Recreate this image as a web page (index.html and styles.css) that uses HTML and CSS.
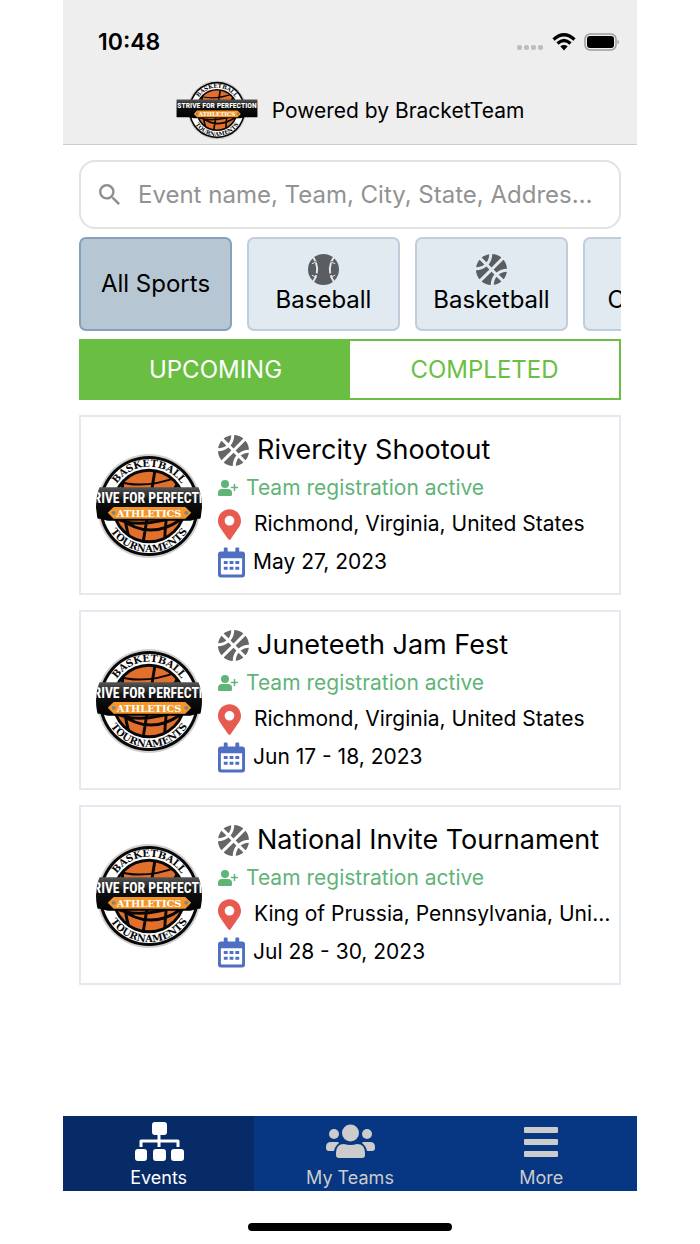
FILE: index.html
```html
<!DOCTYPE html>
<html lang="en">
<head>
    <meta charset="UTF-8">
    <meta name="viewport" content="width=device-width, initial-scale=1.0">
    <title>BracketTeam Events</title>
    <link rel="stylesheet" href="styles.css">
</head>
<body>
    <!-- shared icons -->
    <svg class="sprite" aria-hidden="true">
        <defs>
            <clipPath id="ball-clip"><circle r="36"/></clipPath>
            <linearGradient id="banner-fill" x1="0" y1="0" x2="0" y2="1">
                <stop offset="0" stop-color="#555"/>
                <stop offset=".4" stop-color="#111"/>
                <stop offset="1" stop-color="#000"/>
            </linearGradient>
            <path id="arc-top" d="M-40 0A40 40 0 0 1 40 0"/>
            <path id="arc-bottom" d="M-47 0A47 47 0 0 0 47 0"/>
            <mask id="seams">
                <rect width="32" height="32" fill="#fff"/>
                <path d="M5 3Q14 16 5 29M27 3Q18 16 27 29" fill="none" stroke="#000" stroke-width="2" stroke-dasharray="5 2 11 2 20"/>
                <path d="M4 10l5-2M4 22l5 2M28 10l-5-2M28 22l-5 2" stroke="#000" stroke-width="1"/>
            </mask>
        </defs>
        <symbol id="logo" viewBox="-74 -54 148 108">
            <circle r="53" fill="#d0d0d0"/>
            <circle r="51" fill="#080808"/>
            <circle r="48" fill="#fff"/>
            <circle r="38" fill="#080808"/>
            <circle r="35" fill="#e2702c"/>
            <g clip-path="url(#ball-clip)" fill="none" stroke="#080808" stroke-width="3">
                <path d="M6-36Q0 0-6 37M-26-30Q-30-4-20 34M32-27Q17-8 16 36M-30 12Q0 36 32 14M-36 12Q-10 25 36 8"/>
                <path d="M-35-26Q-6-16 30-30" stroke-width="2"/>
            </g>
            <text class="logo-ring"><textPath href="#arc-top" startOffset="50%">BASKETBALL</textPath></text>
            <text class="logo-ring"><textPath href="#arc-bottom" startOffset="50%">TOURNAMENTS</textPath></text>
            <path d="M-73-19H73V13H50L42 15H-42L-50 13H-73z" fill="url(#banner-fill)"/>
            <text class="logo-name" y="-3">STRIVE FOR PERFECTION</text>
            <path d="M-42 7L-36 1H37L43 7L37 13H-36z" fill="#f5962a"/>
            <circle cx="-36" cy="7" r="2" fill="#7f8388"/>
            <circle cx="38" cy="7" r="2" fill="#7f8388"/>
            <text class="logo-sub" y="11">ATHLETICS</text>
        </symbol>
        <symbol id="basketball" viewBox="0 8 496 496">
            <path d="M212.3 10.3c-43.8 6.3-86.2 24.1-122.2 53.8l77.4 77.4c27.8-35.8 43.3-81.2 44.8-131.2zM248 222L405.9 64.1c-42.4-35-93.6-53.5-145.5-56.1-1.2 63.9-21.5 122.3-58.7 167.7L248 222zM56.1 98.1c-29.7 36-47.5 78.4-53.8 122.2 50-1.5 95.5-17 131.2-44.8L56.1 98.1zm272.2 204.2c45.3-37.1 103.7-57.4 167.7-58.7-2.6-51.9-21.1-103.1-56.1-145.5L282 256l46.3 46.3zM248 290L90.1 447.9c42.4 34.9 93.6 53.5 145.5 56.1 1.3-64 21.6-122.4 58.7-167.7L248 290zm191.9 123.9c29.7-36 47.5-78.4 53.8-122.2-50.1 1.6-95.5 17.1-131.2 44.8l77.4 77.4zM167.7 209.7C122.3 246.9 63.9 267.3 0 268.4c2.6 51.9 21.1 103.1 56.1 145.5L214 256l-46.3-46.3zm116 292c43.8-6.3 86.2-24.1 122.2-53.8l-77.4-77.4c-27.7 35.7-43.2 81.2-44.8 131.2z"/>
        </symbol>
        <symbol id="baseball" viewBox="0 0 32 32">
            <circle cx="16" cy="16" r="16" mask="url(#seams)"/>
        </symbol>
        <symbol id="user-plus" viewBox="0 0 20 16">
            <circle cx="7" cy="4" r="4"/>
            <path d="M4 9h6a4 4 0 0 1 4 4v1.500a1.500 1.500 0 0 1-1.500 1.500h-11A1.500 1.500 0 0 1 0 14.500V13a4 4 0 0 1 4-4z"/>
            <path d="M16.500 4.500v6M13.500 7.500h6" stroke="currentColor" stroke-width="1.500" stroke-linecap="round"/>
        </symbol>
        <symbol id="pin" viewBox="0 0 384 512">
            <path d="M172.268 501.670C26.970 291.031 0 269.413 0 192 0 85.961 85.961 0 192 0s192 85.961 192 192c0 77.413-26.970 99.031-172.268 309.670-9.535 13.774-29.930 13.773-39.464 0zM192 272c44.183 0 80-35.817 80-80s-35.817-80-80-80-80 35.817-80 80 35.817 80 80 80z"/>
        </symbol>
        <symbol id="calendar" viewBox="0 0 28 31">
            <path fill-rule="evenodd" d="M6 1q0-1 1-1h2q1 0 1 1v3h8V1q0-1 1-1h2q1 0 1 1v3h3q3 0 3 3v21q0 3-3 3H3q-3 0-3-3V7q0-3 3-3h3zM3 11v16q0 1 1 1h20q1 0 1-1V11z"/>
            <path d="M6 14h4v3H6zM12 14h4v3h-4zM18 14h4v3h-4zM6 20h4v3H6zM12 20h4v3h-4zM18 20h4v3h-4z"/>
        </symbol>
    </svg>

    <div class="phone">
        <header class="header">
            <div class="status-bar">
                <span class="clock">10:48</span>
                <div class="status-icons">
                    <svg class="signal" width="27" height="6" aria-hidden="true">
                        <rect width="5" height="5" rx="2"/><rect x="7" width="5" height="5" rx="2"/><rect x="14" width="5" height="5" rx="2"/><rect x="21" width="5" height="5" rx="2"/>
                    </svg>
                    <svg width="24" height="18" viewBox="0 0 24 18" aria-hidden="true">
                        <path d="M1.500 6.500Q12-3 22.500 6.500M5.500 10.500Q12 4.500 18.500 10.500" fill="none" stroke="#000" stroke-width="3.200"/>
                        <path d="M8.300 13.300Q12 10.500 15.700 13.300L12 17.500z"/>
                    </svg>
                    <svg width="36" height="18" viewBox="0 0 36 18" aria-hidden="true">
                        <rect x="1" y="1" width="31" height="16" rx="5" fill="none" stroke="#9c9c9c" stroke-width="1.500"/>
                        <rect x="3" y="3" width="27" height="12" rx="3"/>
                        <path d="M33.500 7q1.500 .5 1.500 2t-1.500 2z" fill="#9c9c9c"/>
                    </svg>
                </div>
            </div>
            <div class="brand">
                <svg class="brand-logo" role="img" aria-label="Strive for Perfection Athletics"><use href="#logo"/></svg>
                <span>Powered by BracketTeam</span>
            </div>
        </header>

        <main class="content">
            <label class="search">
                <svg viewBox="3 3 17.500 17.500" aria-hidden="true"><path d="M15.500 14h-.79l-.28-.27A6.471 6.471 0 0 0 16 9.500 6.500 6.500 0 1 0 9.500 16c1.610 0 3.090-.59 4.230-1.570l.27.28v.79l5 4.990L20.490 19l-4.990-5zm-6 0C7.010 14 5 11.990 5 9.500S7.010 5 9.500 5 14 7.010 14 9.500 11.990 14 9.500 14z"/></svg>
                <input type="text" aria-label="Search events" placeholder="Event name, Team, City, State, Address, Zip">
            </label>

            <div class="sports">
                <button type="button" class="sport active">All Sports</button>
                <button type="button" class="sport"><svg><use href="#baseball"/></svg>Baseball</button>
                <button type="button" class="sport"><svg><use href="#basketball"/></svg>Basketball</button>
                <button type="button" class="sport"><svg></svg>Cornhole</button>
            </div>

            <div class="tabs">
                <button type="button" class="tab active">UPCOMING</button>
                <button type="button" class="tab">COMPLETED</button>
            </div>

            <div class="events">
                <article class="event">
                    <div class="event-logo"><svg role="img" aria-label="Strive for Perfection Athletics"><use href="#logo"/></svg></div>
                    <div class="event-info">
                        <h2><svg class="ball"><use href="#basketball"/></svg><span>Rivercity Shootout</span></h2>
                        <p class="registration"><svg><use href="#user-plus"/></svg><span>Team registration active</span></p>
                        <p class="location"><svg><use href="#pin"/></svg><span>Richmond, Virginia, United States</span></p>
                        <p class="date"><svg><use href="#calendar"/></svg><span>May 27, 2023</span></p>
                    </div>
                </article>
                <article class="event">
                    <div class="event-logo"><svg role="img" aria-label="Strive for Perfection Athletics"><use href="#logo"/></svg></div>
                    <div class="event-info">
                        <h2><svg class="ball"><use href="#basketball"/></svg><span>Juneteeth Jam Fest</span></h2>
                        <p class="registration"><svg><use href="#user-plus"/></svg><span>Team registration active</span></p>
                        <p class="location"><svg><use href="#pin"/></svg><span>Richmond, Virginia, United States</span></p>
                        <p class="date"><svg><use href="#calendar"/></svg><span>Jun 17 - 18, 2023</span></p>
                    </div>
                </article>
                <article class="event">
                    <div class="event-logo"><svg role="img" aria-label="Strive for Perfection Athletics"><use href="#logo"/></svg></div>
                    <div class="event-info">
                        <h2><svg class="ball"><use href="#basketball"/></svg><span>National Invite Tournament</span></h2>
                        <p class="registration"><svg><use href="#user-plus"/></svg><span>Team registration active</span></p>
                        <p class="location"><svg><use href="#pin"/></svg><span>King of Prussia, Pennsylvania, United States</span></p>
                        <p class="date"><svg><use href="#calendar"/></svg><span>Jul 28 - 30, 2023</span></p>
                    </div>
                </article>
            </div>
        </main>

        <nav class="bottom-nav">
            <a href="#events" class="nav-item active">
                <svg viewBox="0 0 50 40"><rect x="18" width="15" height="13" rx="3"/><path d="M25 12v13M7 25v-6h37v6" fill="none" stroke="currentColor" stroke-width="3" stroke-linejoin="round"/><rect x="1" y="27" width="12" height="12" rx="3"/><rect x="19" y="27" width="13" height="12" rx="3"/><rect x="37" y="27" width="13" height="12" rx="3"/></svg>
                Events
            </a>
            <a href="#teams" class="nav-item">
                <svg viewBox="0 0 50 40"><circle cx="9" cy="12" r="5"/><circle cx="42" cy="12" r="5"/><circle cx="25.500" cy="11" r="8.500"/><path d="M6 20h6q2 0 2 1-4 3-5 8H4q-3 0-3-3v-1q0-5 5-5zM45 20h-6q-2 0-2 1 4 3 5 8h5q3 0 3-3v-1q0-5-5-5zM19 22q6.500 2 13 0 8 0 8 9v2q0 3-3 3H14q-3 0-3-3v-2q0-9 8-9z"/></svg>
                My Teams
            </a>
            <a href="#more" class="nav-item">
                <svg viewBox="0 0 50 40"><rect x="8" y="5" width="34" height="6" rx="1"/><rect x="8" y="17" width="34" height="6" rx="1"/><rect x="8" y="29" width="34" height="6" rx="1"/></svg>
                More
            </a>
        </nav>
        <div class="home-indicator"></div>
    </div>
</body>
</html>
```
FILE: styles.css
```css
* {
    box-sizing: border-box;
}

body {
    margin: 0;
    background: #fff;
    color: #000;
    font-family: Inter, "Liberation Sans", sans-serif;
    font-size: 21px;
}

button, input {
    font-family: inherit;
    color: inherit;
}

svg {
    flex: none;
    fill: currentColor;
}

.sprite {
    position: absolute;
    width: 0;
    height: 0;
}

.phone {
    width: 82%;
    min-height: 100vh;
    margin: 0 auto;
    display: flex;
    flex-direction: column;
}

/* header */
.header {
    background: #eee;
    border-bottom: 1px solid #ccc;
    padding-bottom: 4px;
}

.status-bar {
    display: flex;
    justify-content: space-between;
    align-items: center;
    padding: 28px 17px 0 35px;
    line-height: 28px;
}

.clock {
    font-size: 23px;
    font-weight: 600;
}

.status-icons {
    display: flex;
    align-items: flex-end;
    gap: 8px;
}

.signal {
    fill: #bdbdbd;
}

.brand {
    display: flex;
    justify-content: center;
    align-items: center;
    gap: 14px;
    padding-top: 24px;
}

.brand-logo {
    width: 82px;
    height: 60px;
}

.logo-ring, .logo-name, .logo-sub {
    text-anchor: middle;
    font-weight: bold;
}

.logo-ring {
    font-family: "DejaVu Serif", serif;
    font-size: 10px;
    fill: #080808;
}

.logo-name {
    font-family: "Liberation Sans Narrow", "Roboto Condensed", Roboto, sans-serif;
    font-size: 14px;
    fill: #fff;
}

.logo-sub {
    font-family: "DejaVu Serif", serif;
    font-size: 10px;
    fill: #fff;
}

/* content */
.content {
    padding: 15px 16px;
    display: flex;
    flex-direction: column;
    gap: 8px;
}

.search {
    display: flex;
    align-items: center;
    gap: 18px;
    height: 69px;
    padding: 0 24px 0 18px;
    border: 2px solid #e2e2e2;
    border-radius: 16px;
    color: #8e8e8e;
}

.search svg {
    width: 21px;
    height: 21px;
}

.search input {
    flex: 1;
    min-width: 0;
    padding: 0;
    border: 0;
    outline: none;
    background: none;
    font-size: 24px;
    text-overflow: ellipsis;
}

.search input::placeholder {
    color: #929292;
    opacity: 1;
}

.sports {
    display: flex;
    gap: 15px;
    overflow: hidden;
}

.sport {
    flex: none;
    width: 153px;
    height: 94px;
    display: flex;
    flex-direction: column;
    align-items: center;
    justify-content: center;
    padding: 0;
    border: 2px solid #c0cddc;
    border-radius: 7px;
    background: #e1e9f1;
    font-size: 24px;
    line-height: 30px;
}

.sport.active {
    background: #b6c6d3;
    border-color: #86a1bc;
}

.sport svg {
    width: 31px;
    height: 31px;
    fill: #5b5e61;
}

.tabs {
    display: flex;
    border: 2px solid #6abf43;
}

.tab {
    flex: 1;
    height: 57px;
    padding: 0;
    border: 0;
    background: #fff;
    color: #6abf43;
    font-size: 24px;
}

.tab.active {
    background: #6abf43;
    color: #fff;
}

/* event cards */
.events {
    display: flex;
    flex-direction: column;
    gap: 15px;
    padding-top: 7px;
}

.event {
    display: flex;
    align-items: center;
    gap: 16px;
    padding: 13px 7px 11px 15px;
    border: 2px solid #e3e9ef;
}

.event-logo {
    flex: none;
    width: 106px;
    height: 106px;
    display: flex;
    justify-content: center;
    border-radius: 50%;
    overflow: hidden;
}

.event-logo svg {
    width: 146px;
    height: 106px;
}

.event-info {
    flex: 1;
    min-width: 0;
}

.event-info h2,
.event-info p {
    display: flex;
    align-items: center;
    margin: 0;
    font-weight: 400;
    line-height: 36px;
}

.event-info span {
    overflow: hidden;
    text-overflow: ellipsis;
    white-space: nowrap;
}

.event-info h2 {
    gap: 8px;
    font-size: 27px;
    line-height: 40px;
}

.ball {
    width: 31px;
    height: 31px;
    fill: #666;
}

.registration {
    gap: 8px;
    color: #5fb478;
}

.registration svg {
    width: 20px;
    height: 16px;
}

.location {
    gap: 13px;
}

.location svg {
    width: 23px;
    height: 31px;
    fill: #e65a50;
}

.event-info .date {
    gap: 8px;
    line-height: 40px;
}

.date svg {
    width: 27px;
    height: 31px;
    fill: #4f6fc3;
}

/* bottom navigation */
.bottom-nav {
    display: flex;
    margin-top: auto;
    background: #073682;
}

.nav-item {
    flex: 1;
    display: flex;
    flex-direction: column;
    align-items: center;
    gap: 3px;
    padding: 6px 0 0;
    color: #ccc;
    font-size: 18px;
    line-height: 26px;
    text-decoration: none;
}

.nav-item.active {
    background: #062b66;
    color: #fff;
}

.nav-item svg {
    width: 50px;
    height: 40px;
}

.home-indicator {
    width: 204px;
    height: 8px;
    margin: 32px auto 13px;
    border-radius: 4px;
    background: #000;
}
```
